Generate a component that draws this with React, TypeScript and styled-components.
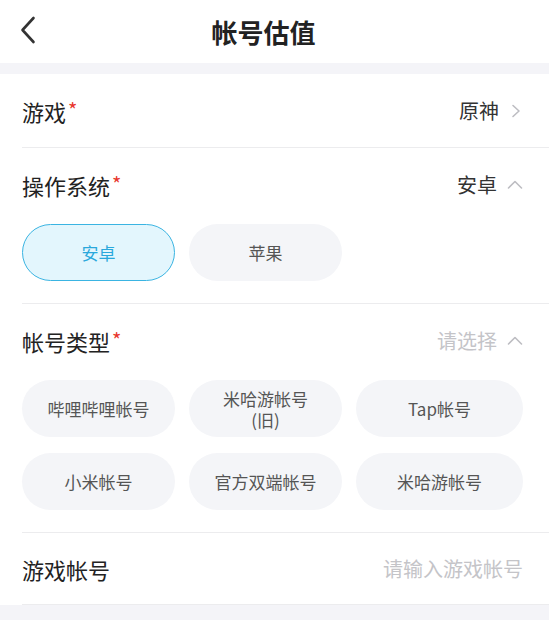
import React from "react";
import styled, { createGlobalStyle } from "styled-components";

const Global = createGlobalStyle`
  html, body { margin: 0; padding: 0; background: #f4f4f8; }
  body { font-family: "Noto Sans CJK SC", "Noto Sans", sans-serif; -webkit-font-smoothing: antialiased; }
  * { box-sizing: border-box; }
`;

const Page = styled.div`
  width: 549px;
  height: 620px;
  display: flex;
  flex-direction: column;
  background: #f4f4f8;
  overflow: hidden;
`;

const Header = styled.header`
  height: 63px;
  background: #fff;
  display: flex;
  align-items: center;
  justify-content: center;
  position: relative;
`;

const BackBtn = styled.button`
  position: absolute;
  left: 16px;
  top: 14px;
  width: 24px;
  height: 32px;
  border: 0;
  padding: 0;
  background: transparent;
  display: flex;
  align-items: center;
  justify-content: center;
`;

const Title = styled.h1`
  margin: 0 22px 0 0;
  font-size: 26px;
  font-weight: 700;
  color: #222;
`;

const Band = styled.div`
  height: 11px;
  background: #f4f4f8;
`;

const Card = styled.section`
  background: #fff;
  padding-left: 22px;
`;

const Block = styled.div`
  border-bottom: 1px solid #ececee;
  padding-right: 26px;
`;

const Row = styled.div<{ $h?: number }>`
  height: ${(p) => p.$h ?? 73}px;
  display: flex;
  align-items: center;
  justify-content: space-between;
`;

const Label = styled.div`
  font-size: 22px;
  color: #222;
  display: flex;
  align-items: center;
`;

const Star = styled.span`
  color: #e8362c;
  font-size: 20px;
  margin-left: 2px;
  line-height: 1;
  position: relative;
  top: -1px;
`;

const Value = styled.div<{ $muted?: boolean }>`
  font-size: 20px;
  color: ${(p) => (p.$muted ? "#c4c4c8" : "#333")};
  display: flex;
  align-items: center;
  gap: 10px;
`;

const Chips = styled.div`
  display: grid;
  grid-template-columns: 153px 153px 1fr;
  column-gap: 14px;
  row-gap: 16px;
  padding: 3px 0 22px;
`;

const Chip = styled.div<{ $active?: boolean }>`
  height: 57px;
  border-radius: 29px;
  display: flex;
  flex-direction: column;
  align-items: center;
  justify-content: center;
  text-align: center;
  font-size: 17px;
  line-height: 21px;
  background: ${(p) => (p.$active ? "#e3f6fd" : "#f4f5f8")};
  color: ${(p) => (p.$active ? "#2aa8dc" : "#555")};
  border: ${(p) => (p.$active ? "1.5px solid #3ab4e2" : "none")};
`;

const ChipLine = styled.span`
  display: block;
`;

const Chevron = ({ dir }: { dir: "right" | "up" }) =>
  dir === "right" ? (
    <svg width="14" height="14" viewBox="0 0 14 14" fill="none">
      <path d="M4 1.5 L10 7 L4 12.5" stroke="#bdbdc2" strokeWidth="1.6" strokeLinecap="round" strokeLinejoin="round" />
    </svg>
  ) : (
    <svg width="16" height="12" viewBox="0 0 16 12" fill="none">
      <path d="M1.5 9 L8 2.5 L14.5 9" stroke="#bdbdc2" strokeWidth="1.6" strokeLinecap="round" strokeLinejoin="round" />
    </svg>
  );

const osOptions = ["安卓", "苹果"];
const accountTypes = [["哔哩哔哩帐号"], ["米哈游帐号", "(旧)"], ["Tap帐号"], ["小米帐号"], ["官方双端帐号"], ["米哈游帐号"]];

export default function App() {
  return (
    <Page>
      <Global />
      <Header>
        <BackBtn aria-label="back">
          <svg width="16" height="28" viewBox="0 0 16 28" fill="none">
            <path d="M13.5 2 L2.5 14 L13.5 26" stroke="#333" strokeWidth="2.6" strokeLinecap="round" strokeLinejoin="round" />
          </svg>
        </BackBtn>
        <Title>帐号估值</Title>
      </Header>
      <Band />
      <Card>
        <Block>
          <Row>
            <Label>
              游戏<Star>*</Star>
            </Label>
            <Value>
              原神 <Chevron dir="right" />
            </Value>
          </Row>
        </Block>
        <Block>
          <Row>
            <Label>
              操作系统<Star>*</Star>
            </Label>
            <Value>
              安卓 <Chevron dir="up" />
            </Value>
          </Row>
          <Chips>
            {osOptions.map((o, i) => (
              <Chip key={o} $active={i === 0}>
                {o}
              </Chip>
            ))}
          </Chips>
        </Block>
        <Block>
          <Row>
            <Label>
              帐号类型<Star>*</Star>
            </Label>
            <Value $muted>
              请选择 <Chevron dir="up" />
            </Value>
          </Row>
          <Chips>
            {accountTypes.map((lines, i) => (
              <Chip key={i}>
                {lines.map((l) => (
                  <ChipLine key={l}>{l}</ChipLine>
                ))}
              </Chip>
            ))}
          </Chips>
        </Block>
        <Block>
          <Row $h={71}>
            <Label>游戏帐号</Label>
            <Value $muted>请输入游戏帐号</Value>
          </Row>
        </Block>
      </Card>
    </Page>
  );
}
